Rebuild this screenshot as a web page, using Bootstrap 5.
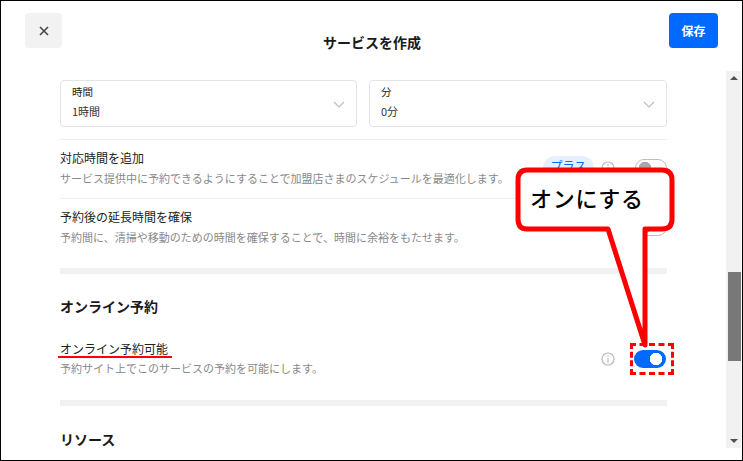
<!DOCTYPE html>
<html lang="ja">
<head>
<meta charset="utf-8">
<title>サービスを作成</title>
<link rel="stylesheet" href="https://cdn.jsdelivr.net/npm/bootstrap@5.3.0/dist/css/bootstrap.min.css">
<style>
html,body{height:461px;overflow:hidden;background:#fff}
body{font-family:"Noto Sans CJK JP","Liberation Sans",sans-serif;color:#1a1a1a}
.shot{position:relative;width:743px;height:461px;border:1px solid #000;overflow:hidden}
.topbar{height:70px;padding:12px 24px 0 24px}
.closer{width:37px;height:35px;background:#f2f2f2;border:0;border-radius:4px;padding:0}
.ttl{font-size:14px;font-weight:700;margin:20px 0 0 13px;line-height:18px}
.saver{width:49px;height:35px;background:#0069ff;border:0;border-radius:4px;padding:0;font-size:12px;font-weight:700;color:#fff}
.mainarea{height:377px}
.scroller{width:666px;padding:9px 0 0 59px;overflow:hidden;flex:none}
.selbox{flex:1 1 0;height:47px;border:1px solid #e4e4e4;border-radius:4px;padding:2px 11px 0 11px}
.selbox-first{flex:0 0 297px}
.sellabel{font-size:10.5px;line-height:17px;color:#222}
.selval{font-size:11px;line-height:18px;color:#333;margin-top:2px}
.thin{height:1px;background:#f0f0f0}
.thin-first{margin-top:12px}
.optrow{height:58px;padding-bottom:2px}
.optname{font-size:12px;line-height:18px;color:#222}
.optdesc{font-size:11px;line-height:18px;color:#888;margin-top:2px}
.optdesc-near{margin-top:1px}
.thick{height:6px;background:#f1f1f1}
.thick-one{margin-top:11px}
.thick-two{margin-top:23px}
.sechead{font-size:14px;font-weight:700;line-height:20px;color:#1a1a1a}
.head-one{margin-top:22px}
.head-two{margin-top:23px}
.onlinerow{margin-top:24px}
.plusbadge{width:51px;height:24px;border-radius:12px;background:#e5f0ff;color:#0069ff;font-size:12px;line-height:20px;text-align:center;margin-right:7px}
.gap-sel{gap:12px}
.tog{width:31px;height:18px;margin:0!important;float:none!important;border-radius:9px!important;box-shadow:none!important}
.tog.off{border:1px solid #bdbdbd;background-color:#fff;background-image:radial-gradient(circle at 9px 8px,#a8a8a8 6px,transparent 6.5px);background-size:auto;background-position:0 0}
.tog.on{border:0;background-color:#0069ff;background-image:radial-gradient(circle at 22px 9px,#fff 6px,transparent 6.5px);background-size:auto;background-position:0 0}
.togon-wrap{margin-right:1px!important}
.sbar{width:15px;margin-left:auto;margin-right:1px;background:#f1f1f1;position:relative;flex:none}
.sthumb{position:absolute;left:2px;right:0;top:201px;height:89px;background:#787878}
.sup,.sdn{position:absolute;left:4px;width:0;height:0;border-left:4px solid transparent;border-right:4px solid transparent}
.sup{top:5px;border-bottom:4px solid #505050}
.sdn{bottom:5px;border-top:4px solid #505050}
.infoicon{display:block;margin-right:20px;flex:none}
.infoicon-near{margin-right:19px}
.redline{position:absolute;left:57px;top:355px;width:114px;height:0;border-top:2px solid #f00}
.dashbox{position:absolute;left:629px;top:342px;width:44px;height:32px;border:3px dashed #f00}
.bubble{position:absolute;left:0;top:0;pointer-events:none}
.bubtext{position:absolute;left:529px;top:180px;font-size:22px;line-height:32px;font-weight:500;letter-spacing:.7px;color:#000;white-space:nowrap}
</style>
</head>
<body>
<div class="shot">
  <div class="topbar d-flex justify-content-between align-items-start">
    <button class="closer d-flex align-items-center justify-content-center" aria-label="閉じる">
      <svg width="10" height="10" viewBox="0 0 10 10"><path d="M1 1L9 9M9 1L1 9" stroke="#444" stroke-width="1.6" fill="none"/></svg>
    </button>
    <div class="ttl">サービスを作成</div>
    <button class="saver">保存</button>
  </div>
  <div class="mainarea d-flex">
    <div class="scroller">
      <div class="d-flex gap-sel">
        <div class="selbox selbox-first d-flex justify-content-between align-items-center">
          <div class="align-self-start"><div class="sellabel">時間</div><div class="selval">1時間</div></div>
          <svg width="12" height="7" viewBox="0 0 12 7"><path d="M1 1L6 6L11 1" stroke="#bdbdbd" stroke-width="1.2" fill="none"/></svg>
        </div>
        <div class="selbox d-flex justify-content-between align-items-center">
          <div class="align-self-start"><div class="sellabel">分</div><div class="selval">0分</div></div>
          <svg width="12" height="7" viewBox="0 0 12 7"><path d="M1 1L6 6L11 1" stroke="#bdbdbd" stroke-width="1.2" fill="none"/></svg>
        </div>
      </div>
      <div class="thin thin-first"></div>
      <div class="optrow d-flex align-items-center justify-content-between">
        <div><div class="optname">対応時間を追加</div><div class="optdesc">サービス提供中に予約できるようにすることで加盟店さまのスケジュールを最適化します。</div></div>
        <div class="d-flex align-items-center">
          <div class="plusbadge">プラス</div>
          <svg class="infoicon" width="14" height="14" viewBox="0 0 14 14"><circle cx="7" cy="7" r="6" stroke="#bbb" stroke-width="1.2" fill="none"/><path d="M7 6.2V10.4" stroke="#bbb" stroke-width="1.3"/><circle cx="7" cy="4.1" r=".8" fill="#bbb"/></svg>
          <div class="form-check form-switch p-0 m-0 d-flex align-items-center"><input class="form-check-input tog off" type="checkbox" aria-label="対応時間を追加"></div>
        </div>
      </div>
      <div class="thin"></div>
      <div class="optrow d-flex align-items-center justify-content-between">
        <div><div class="optname">予約後の延長時間を確保</div><div class="optdesc">予約間に、清掃や移動のための時間を確保することで、時間に余裕をもたせます。</div></div>
        <div class="form-check form-switch p-0 m-0 d-flex align-items-center"><input class="form-check-input tog off" type="checkbox" aria-label="予約後の延長時間を確保"></div>
      </div>
      <div class="thick thick-one"></div>
      <div class="sechead head-one">オンライン予約</div>
      <div class="onlinerow d-flex align-items-center justify-content-between">
        <div><div class="optname">オンライン予約可能</div><div class="optdesc optdesc-near">予約サイト上でこのサービスの予約を可能にします。</div></div>
        <div class="d-flex align-items-center">
          <svg class="infoicon infoicon-near" width="14" height="14" viewBox="0 0 14 14"><circle cx="7" cy="7" r="6" stroke="#bbb" stroke-width="1.2" fill="none"/><path d="M7 6.2V10.4" stroke="#bbb" stroke-width="1.3"/><circle cx="7" cy="4.1" r=".8" fill="#bbb"/></svg>
          <div class="form-check form-switch p-0 m-0 togon-wrap d-flex align-items-center"><input class="form-check-input tog on" type="checkbox" checked aria-label="オンライン予約可能"></div>
        </div>
      </div>
      <div class="thick thick-two"></div>
      <div class="sechead head-two">リソース</div>
    </div>
    <div class="sbar"><span class="sup"></span><span class="sthumb"></span><span class="sdn"></span></div>
  </div>
  <div class="redline"></div>
  <div class="dashbox"></div>
  <svg class="bubble" width="743" height="461" viewBox="0 0 743 461">
    <path d="M526 169H661Q671 169 671 179V218Q671 228 661 228H644V344L607 228H526Q517 228 517 218V179Q517 169 526 169Z" fill="#fff" stroke="#f00" stroke-width="5" stroke-linejoin="round"/>
  </svg>
  <div class="bubtext">オンにする</div>
</div>
<script src="https://cdn.jsdelivr.net/npm/bootstrap@5.3.0/dist/js/bootstrap.bundle.min.js"></script>
</body>
</html>
